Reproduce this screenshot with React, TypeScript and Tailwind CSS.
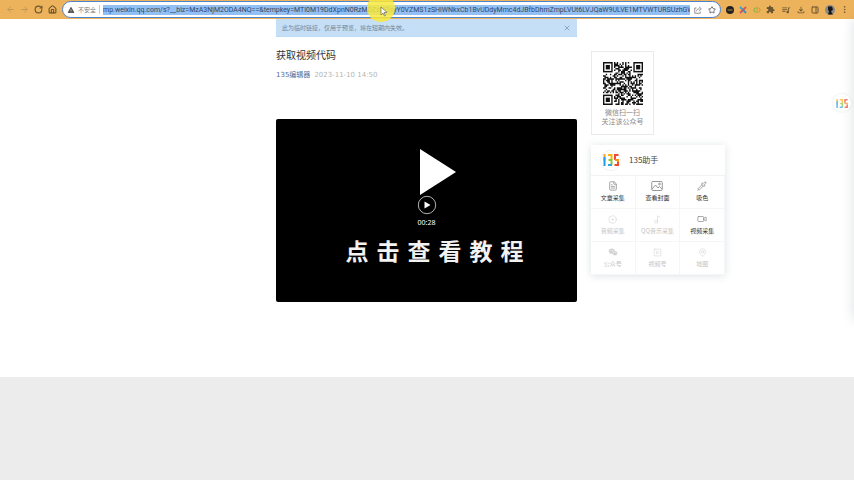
import type { ReactNode } from "react";
import {
  ArrowLeft,
  ArrowRight,
  Disc,
  EllipsisVertical,
  FileText,
  House,
  Music2,
  PanelRight,
  Pipette,
  RotateCw,
  SquarePlay,
  Star,
  Video,
  MapPin,
  X,
} from "lucide-react";
import { AiOutlineWechat } from "react-icons/ai";
import { IoIosWarning } from "react-icons/io";
import { MdExtension, MdOutlineFileDownload, MdQueueMusic } from "react-icons/md";

const address =
  "mp.weixin.qq.com/s?__biz=MzA3NjM2ODA4NQ==&tempkey=MTI0M19DdXpnN0RzMDZzNGsyY0VZMS1zSHlWNkxCb1BvUDdyMmc4dJBfbDhmZmpLVUt6LVJQaW9ULVE1MTVWTURSUzhGWV";

type Tool = { label: string; icon: ReactNode; enabled: boolean };

function PictureIcon() {
  return (
    <svg viewBox="0 0 24 20" className="h-[10px] w-3" fill="none" stroke="currentColor" strokeWidth="1.8">
      <rect x="1.500" y="1" width="21" height="18" rx="2" />
      <path d="M2 16l7-8 5 6 3-3 5 5" />
      <circle cx="17" cy="6" r="1.800" />
    </svg>
  );
}

function ShareIcon() {
  return (
    <svg viewBox="0 0 16 16" className="size-2" fill="none" stroke="currentColor" strokeWidth="1.6">
      <path d="M5 4H1.500v10.500h11V11" />
      <path d="M5 10.500C5.500 7 8 5.500 11 5.500M10 1.500l4.500 4-4.500 4" />
    </svg>
  );
}

const tools: Tool[] = [
  { label: "文章采集", icon: <FileText size={10} strokeWidth={1.8} />, enabled: true },
  { label: "查看封面", icon: <PictureIcon />, enabled: true },
  { label: "吸色", icon: <Pipette size={10} strokeWidth={1.8} />, enabled: true },
  { label: "音频采集", icon: <Disc size={9} strokeWidth={1.5} />, enabled: false },
  { label: "QQ音乐采集", icon: <Music2 size={9} strokeWidth={1.5} />, enabled: false },
  { label: "视频采集", icon: <Video size={10} strokeWidth={1.8} />, enabled: true },
  { label: "公众号", icon: <AiOutlineWechat size={10} />, enabled: false },
  { label: "视频号", icon: <SquarePlay size={9} strokeWidth={1.5} />, enabled: false },
  { label: "地图", icon: <MapPin size={9} strokeWidth={1.5} />, enabled: false },
];

function Logo135({ className }: { className: string }) {
  return (
    <svg viewBox="0 0 16 12" className={className} fill="none" strokeWidth="2" aria-label="135">
      <path d="M1.5 0v7" stroke="#f5a623" />
      <path d="M1.5 3v9" stroke="#1e9bea" />
      <path d="M5 1h3.500v5" stroke="#f7b515" />
      <path d="M5.500 6h3v5" stroke="#8cc63f" />
      <path d="M9 11H5" stroke="#2ba5e0" />
      <path d="M15.500 1H12v5" stroke="#ef4a3c" />
      <path d="M12 6h3v3" stroke="#f39a1e" />
      <path d="M15 8v3h-3.500" stroke="#e94b35" />
    </svg>
  );
}

const QR_SIZE = 29;

function inFinder(x: number, y: number) {
  const far = QR_SIZE - 8;
  return (x < 8 && y < 8) || (x >= far && y < 8) || (x < 8 && y >= far);
}

// fixed seed so the modules are the same on every render
function qrModules() {
  const cells: string[] = [];
  let seed = 135;
  for (let y = 0; y < QR_SIZE; y++) {
    for (let x = 0; x < QR_SIZE; x++) {
      seed = (seed * 16807) % 2147483647;
      if (!inFinder(x, y) && seed % 100 < 56) cells.push(`M${x} ${y}h1v1h-1z`);
    }
  }
  return cells.join("");
}

const qrPath = qrModules();

function QrCode() {
  return (
    <svg viewBox="0 0 29 29" className="h-[43px] w-10" preserveAspectRatio="none" aria-label="公众号二维码">
      <path d={qrPath} fill="#111" />
      {[
        [0, 0],
        [22, 0],
        [0, 22],
      ].map(([x, y]) => (
        <g key={`${x}-${y}`}>
          <rect x={x + 0.5} y={y + 0.5} width="6" height="6" fill="none" stroke="#111" />
          <rect x={x + 2} y={y + 2} width="3" height="3" fill="#111" />
        </g>
      ))}
    </svg>
  );
}

function NavButton({ label, muted, children }: { label: string; muted?: boolean; children: ReactNode }) {
  return (
    <button type="button" aria-label={label} className={muted ? "text-[#bd9658]" : "text-[#6b5630]"}>
      {children}
    </button>
  );
}

function BrowserBar() {
  return (
    <header className="flex h-[19px] items-center bg-[#edb35c] pr-[5px] pl-[6px]">
      <nav className="flex w-14 shrink-0 items-center gap-[5px]">
        <NavButton label="后退" muted>
          <ArrowLeft size={9} strokeWidth={2.5} />
        </NavButton>
        <NavButton label="前进" muted>
          <ArrowRight size={9} strokeWidth={2.5} />
        </NavButton>
        <NavButton label="重新加载">
          <RotateCw size={9} strokeWidth={3} />
        </NavButton>
        <NavButton label="主页">
          <House size={9} strokeWidth={3} />
        </NavButton>
      </nav>

      <div className="relative flex h-[17px] min-w-0 flex-1 items-center rounded-full border border-[#4a83cf] bg-white pr-1 pl-1">
        <IoIosWarning size={8} className="shrink-0 text-[#555]" />
        <span className="ml-[3px] shrink-0 text-[6px] text-[#777]">不安全</span>
        <span className="mx-[3px] h-[9px] w-px shrink-0 bg-[#ccc]" />
        <input
          aria-label="地址"
          readOnly
          value={address}
          className="h-[10px] min-w-0 flex-1 bg-[#92c0f4] pt-px font-['Roboto'] text-[7px] text-[#34465f] outline-none"
        />
        <button type="button" aria-label="分享" className="ml-1 text-[#777]">
          <ShareIcon />
        </button>
        <button type="button" aria-label="收藏" className="ml-[6px] text-[#555]">
          <Star size={8} strokeWidth={2.5} />
        </button>
        <MouseHighlight />
      </div>

      <div className="ml-[5px] flex w-[123px] shrink-0 items-center justify-between text-[#6b5630]">
        <button type="button" aria-label="扩展一">
          <svg viewBox="0 0 8 8" className="size-2">
            <circle cx="4" cy="4" r="4" fill="#222" />
            <path d="M1.500 4h5" stroke="#b98b45" />
          </svg>
        </button>
        <button type="button" aria-label="扩展二">
          <svg viewBox="0 0 8 8" className="size-2" strokeWidth="1.8">
            <path d="M1 1l3 3" stroke="#2f9fe0" />
            <path d="M7 1L4 4" stroke="#e0524d" />
            <path d="M4 4L1 7" stroke="#d94f62" />
            <path d="M4 4l3 3" stroke="#2f8fc0" />
          </svg>
        </button>
        <button type="button" aria-label="扩展三">
          <svg viewBox="0 0 8 8" className="size-2" fill="none">
            <path d="M4 2H2L1 3v2l1 1h2" stroke="#7fb544" />
            <path d="M4 6h2l1-1V3L6 2H4M3 4h2" stroke="#c9a02c" />
          </svg>
        </button>
        <button type="button" aria-label="扩展程序">
          <MdExtension size={9} />
        </button>
        <button type="button" aria-label="媒体控制">
          <MdQueueMusic size={10} />
        </button>
        <button type="button" aria-label="下载内容">
          <MdOutlineFileDownload size={10} />
        </button>
        <button type="button" aria-label="侧边栏">
          <PanelRight size={8} strokeWidth={3} />
        </button>
        <button type="button" aria-label="个人资料">
          <svg viewBox="0 0 10 10" className="size-[10px]">
            <circle cx="5" cy="5" r="5" fill="#8b8a86" />
            <path d="M3 1.500h4l1 3-2 2 2 3H3l1-3-1-2z" fill="#171717" />
          </svg>
        </button>
        <button type="button" aria-label="更多">
          <EllipsisVertical size={9} />
        </button>
      </div>
    </header>
  );
}

// pointer with the recorder's yellow halo, lies over the address
function MouseHighlight() {
  return (
    <svg viewBox="0 0 28 28" className="pointer-events-none absolute -top-2 left-[304px] z-10 size-7">
      <circle cx="14" cy="14" r="14" fill="#f7e93f" fillOpacity="0.86" />
      <path d="M14 13v8l2-2 1.500 3 1-.5-1.500-3H20z" fill="#fff" stroke="#555" strokeWidth="0.6" />
    </svg>
  );
}

function VideoPlayer() {
  return (
    <div className="mt-[38px] flex h-[183px] flex-col items-center rounded-[2px] bg-black text-white">
      <svg viewBox="0 0 36 46" className="mt-[30px] ml-[22px] h-[46px] w-9 shrink-0" fill="#fff">
        <path d="M0 0l36 23L0 46z" />
      </svg>
      <button type="button" aria-label="播放" className="shrink-0">
        <svg viewBox="0 0 20 20" className="size-5" fill="none">
          <circle cx="10" cy="10" r="8.700" stroke="#ddd" strokeWidth="0.8" />
          <path d="M7.500 6.500l6 3.500-6 3.500z" fill="#fff" />
        </svg>
      </button>
      <span className="mt-[3px] font-['Noto_Sans'] text-[7px] leading-[10px]">00:28</span>
      <p className="mt-[6px] flex gap-2 pl-4 text-[23px] leading-8 font-bold text-[#f2f2f2]">
        {Array.from("点击查看教程").map((char) => (
          <span key={char}>{char}</span>
        ))}
      </p>
    </div>
  );
}

function Article() {
  return (
    <article className="w-[301px] shrink-0">
      <div className="flex h-[18px] items-center justify-between border-b border-dotted border-[#b3d4f0] bg-[#c5dff6] pr-[6px] pl-[6px] text-[6px] text-[#71879f]">
        <p>此为临时链接，仅用于预览，将在短期内失效。</p>
        <button type="button" aria-label="关闭" className="text-[#6d8db0]">
          <X size={8} />
        </button>
      </div>
      <h1 className="mt-2 text-[10px] leading-5 text-[#333]">获取视频代码</h1>
      <div className="mt-1 flex gap-1 font-['DejaVu_Sans','Noto_Sans_CJK_SC',sans-serif] text-[7px] leading-3">
        <a href="#" className="text-[#576b95]">
          135编辑器
        </a>
        <time className="text-[#b5b5b5]">2023-11-10 14:50</time>
      </div>
      <VideoPlayer />
    </article>
  );
}

function HelperPanel() {
  return (
    <section className="mt-[10px] w-[134px] bg-white shadow-[0_1px_8px_rgba(90,110,130,0.2)]">
      <div className="flex h-[31px] items-center gap-2 border-b border-[#f1f2f3] pl-[9px]">
        <span className="flex size-[21px] items-center justify-center rounded-full border border-[#eef1f4]">
          <Logo135 className="h-3 w-4" />
        </span>
        <h2 className="text-[8px] text-[#444]">135助手</h2>
      </div>
      <div className="grid grid-cols-3">
        {tools.map((tool) => (
          <button
            key={tool.label}
            type="button"
            disabled={!tool.enabled}
            className={
              tool.enabled
                ? "flex h-[33px] flex-col items-center justify-center border-r border-b border-[#f5f6f7] text-[#8c8c8c]"
                : "flex h-[33px] flex-col items-center justify-center border-r border-b border-[#f5f6f7] text-[#d2d2d2]"
            }
          >
            <span className="flex h-3 items-center">{tool.icon}</span>
            <span
              className={
                tool.enabled
                  ? "text-[6px] leading-3 whitespace-nowrap text-[#333]"
                  : "text-[6px] leading-3 whitespace-nowrap text-[#c4c4c4]"
              }
            >
              {tool.label}
            </span>
          </button>
        ))}
      </div>
    </section>
  );
}

function Sidebar() {
  return (
    <aside className="pt-8">
      <div className="flex h-[84px] w-[63px] flex-col items-center border border-[#eaeaea] pt-[10px]">
        <QrCode />
        <p className="mt-[3px] text-center text-[7px] leading-[9px] text-[#8a8a8a]">
          微信扫一扫
          <br />
          关注该公众号
        </p>
      </div>
      <HelperPanel />
    </aside>
  );
}

function App() {
  return (
    <div className="flex min-h-screen flex-col overflow-hidden bg-[#ececec] font-['Noto_Sans_CJK_SC',sans-serif]">
      <BrowserBar />
      <main className="relative bg-white pb-[75px]">
        <div className="flex justify-center gap-[14px] pl-[147px]">
          <Article />
          <Sidebar />
        </div>
        <div className="absolute top-0 -right-2 h-[300px] w-2 shadow-[0_0_12px_rgba(60,70,80,0.2)]" />
        <button
          type="button"
          aria-label="打开135助手"
          className="absolute top-[75px] right-[3px] flex size-[18px] items-center justify-center rounded-full bg-white shadow-[0_0_3px_rgba(0,0,0,0.1)]"
        >
          <Logo135 className="h-[9px] w-3 opacity-70" />
        </button>
      </main>
    </div>
  );
}

export default App;
